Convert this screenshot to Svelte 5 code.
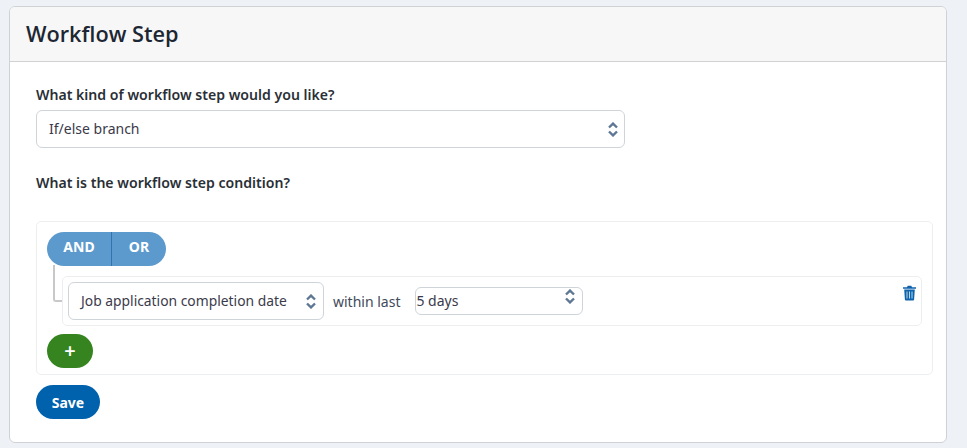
<script lang="ts">
  let stepKind = 'If/else branch';
  let field = 'Job application completion date';
  let range = '5 days';
</script>

<div class="page">
  <section class="card">
    <header class="card-header">
      <h1>Workflow Step</h1>
    </header>
    <div class="card-body">
      <div class="label first">What kind of workflow step would you like?</div>
      <div class="select main-select">
        <span>{stepKind}</span>
        <svg class="updown" width="10" height="15" viewBox="0 0 10 15"><path d="M1 5.500 5 1.600 9 5.500M1 9.500 5 13.400 9 9.500" /></svg>
      </div>
      <div class="label second">What is the workflow step condition?</div>

      <div class="builder">
        <div class="toggle">
          <button class="and">AND</button>
          <button class="or">OR</button>
        </div>
        <div class="rule-wrap">
          <div class="connector"></div>
          <div class="rule">
            <div class="select field-select">
              <span>{field}</span>
              <svg class="updown" width="10" height="15" viewBox="0 0 10 15"><path d="M1 5.500 5 1.600 9 5.500M1 9.500 5 13.400 9 9.500" /></svg>
            </div>
            <span class="op">within last</span>
            <div class="select range-select">
              <span>{range}</span>
              <svg class="updown" width="10" height="15" viewBox="0 0 10 15"><path d="M1 5.500 5 1.600 9 5.500M1 9.500 5 13.400 9 9.500" /></svg>
            </div>
            <svg class="trash" width="13" height="16" viewBox="0 0 13 15">
              <path class="trash-body" d="M1.200 4h10.600l-.7 10a1 1 0 0 1-1 1H2.900a1 1 0 0 1-1-1z" />
              <path class="trash-lid" d="M0 1.700h4L4.700.3h3.600L9 1.700h4v1.500H0z" />
              <path class="trash-bars" d="M4 6v7M6.500 6v7M9 6v7" />
            </svg>
          </div>
        </div>
        <button class="add">+</button>
      </div>

      <button class="save">Save</button>
    </div>
  </section>
</div>

<style>
  :global(body) {
    margin: 0;
    background: #eef2f6;
  }

  .page {
    height: 448px;
    box-sizing: border-box;
    padding: 6px 20px 5px 9px;
    font-family: "Noto Sans", "Open Sans", sans-serif;
    color: #212529;
  }

  .card {
    height: 437px;
    box-sizing: border-box;
    background: #fff;
    border: 1px solid #cfd1d4;
    border-radius: 6px;
    overflow: hidden;
  }

  .card-header {
    height: 54px;
    box-sizing: content-box;
    background: #f7f7f7;
    border-bottom: 1px solid #cfd1d4;
    padding-left: 16px;
    display: flex;
    align-items: center;
  }

  h1 {
    margin: 0 0 2px;
    font-family: "Open Sans", sans-serif;
    font-size: 21.700px;
    font-weight: 600;
    color: #1d2733;
  }

  .card-body {
    padding: 0 13px 0 26px;
  }

  .label {
    font-size: 14.100px;
    font-weight: 600;
    color: #2a2f36;
    line-height: 18px;
  }

  .label.first {
    margin-top: 24px;
    margin-bottom: 6px;
  }

  .label.second {
    margin-top: 26px;
  }

  .select {
    box-sizing: border-box;
    display: flex;
    align-items: center;
    justify-content: space-between;
    background: #fff;
    border: 1px solid #ced4da;
    border-radius: 6px;
    font-size: 14px;
    color: #3b3a4a;
  }

  .select span {
    padding-bottom: 2px;
  }

  .main-select {
    width: 589px;
    height: 38px;
    padding: 0 6px 0 12px;
  }

  .updown {
    fill: none;
    stroke: #5d7794;
    stroke-width: 2.400;
  }

  .builder {
    box-sizing: border-box;
    margin-top: 29px;
    height: 154px;
    border: 1px solid #eceef0;
    border-radius: 5px;
    padding: 10px;
  }

  .toggle {
    display: flex;
    width: 119px;
    height: 34px;
    border-radius: 17px;
    overflow: hidden;
    background: #5c9ace;
  }

  .toggle button {
    border: 0;
    background: none;
    color: #fff;
    font-family: inherit;
    font-size: 14px;
    font-weight: 700;
    padding: 0 0 6px;
  }

  .and {
    width: 65px;
    border-right: 1px solid #2f74b0 !important;
  }

  .or {
    width: 54px;
  }

  .rule-wrap {
    position: relative;
    margin-top: 10px;
    padding-left: 15px;
  }

  .connector {
    position: absolute;
    left: 6px;
    top: -11px;
    width: 10px;
    height: 37px;
    border-left: 2px solid #c8c8c8;
    border-bottom: 2px solid #c8c8c8;
    border-radius: 0 0 0 3px;
    box-sizing: border-box;
  }

  .rule {
    position: relative;
    box-sizing: border-box;
    height: 50px;
    border: 1px solid #eceef0;
    border-radius: 5px;
    display: flex;
    align-items: center;
    padding-left: 5px;
  }

  .field-select {
    width: 256px;
    height: 38px;
    padding: 0 7px 0 12px;
    font-size: 13.850px;
  }

  .op {
    margin-left: 9px;
    font-size: 14px;
    color: #3f4a5a;
  }

  .range-select {
    width: 168px;
    height: 28px;
    margin-left: 15px;
    margin-bottom: 1px;
    padding: 0 7px 0 0;
  }

  .range-select span {
    padding-bottom: 0;
  }

  .range-select .updown {
    margin-bottom: 8px;
  }

  .trash {
    position: absolute;
    right: 5px;
    top: 8px;
  }

  .trash-body,
  .trash-lid {
    fill: #0f63ad;
  }

  .trash-bars {
    fill: none;
    stroke: #b9dcec;
    stroke-width: 1;
  }

  .add {
    display: block;
    margin-top: 8px;
    width: 46px;
    height: 34px;
    border: 0;
    border-radius: 17px;
    background: #35841f;
    color: #fff;
    font-family: inherit;
    font-size: 20px;
    font-weight: 600;
    line-height: 1;
    padding: 0;
  }

  .save {
    display: block;
    margin-top: 10px;
    width: 64px;
    height: 34px;
    border: 0;
    border-radius: 17px;
    background: #0061ad;
    color: #fff;
    font-family: inherit;
    font-size: 14px;
    font-weight: 700;
    padding: 0;
  }
</style>
